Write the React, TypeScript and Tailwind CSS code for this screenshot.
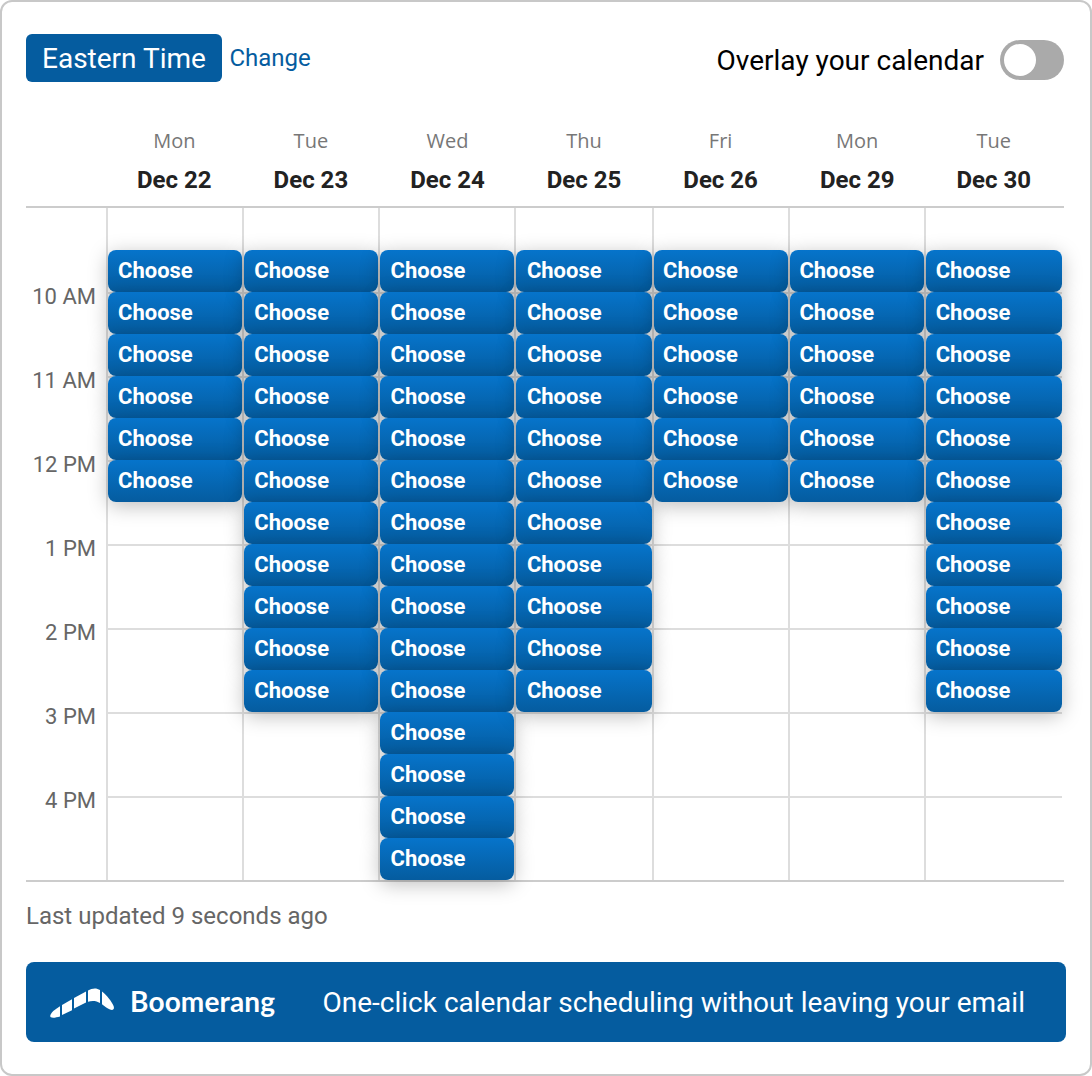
const days = [
  { name: 'Mon', date: 'Dec 22', slots: 6, width: 'w-[136px]', pad: 'pl-[10px]' },
  { name: 'Tue', date: 'Dec 23', slots: 11, width: 'w-[136px]', pad: 'pl-[10.3px]' },
  { name: 'Wed', date: 'Dec 24', slots: 15, width: 'w-[136px]', pad: 'pl-[10.6px]' },
  { name: 'Thu', date: 'Dec 25', slots: 11, width: 'w-[138px]', pad: 'pl-[10.9px]' },
  { name: 'Fri', date: 'Dec 26', slots: 6, width: 'w-[136px]', pad: 'pl-[9.1px]' },
  { name: 'Mon', date: 'Dec 29', slots: 6, width: 'w-[136px]', pad: 'pl-[9.4px]' },
  { name: 'Tue', date: 'Dec 30', slots: 11, width: 'w-[138px]', pad: 'pl-[9.7px]' },
];

const hours = ['10 AM', '11 AM', '12 PM', '1 PM', '2 PM', '3 PM', '4 PM'];

type Day = (typeof days)[number];

function Header() {
  return (
    <header className="flex h-12 items-center">
      <div className="flex h-12 items-center rounded-md bg-[#055c9f] px-4 pt-0.5 text-[28px] text-white">
        Eastern Time
      </div>
      <a className="ml-[7.5px] text-2xl text-[#055c9f]">Change</a>
      <span className="mt-1.5 ml-auto text-[28px] text-black">Overlay your calendar</span>
      <button aria-label="Overlay your calendar" className="mt-1 mr-0.5 ml-4 h-10 w-16 rounded-full bg-[#aaa] p-1">
        <span className="block size-8 rounded-full bg-white" />
      </button>
    </header>
  );
}

function DayColumn({ day }: { day: Day }) {
  return (
    <div className={`grid h-[672px] border-l-2 border-[#ddd] ${day.width}`}>
      <div className="col-start-1 row-start-1">
        <div className="h-[84px]" />
        {hours.map((hour) => (
          <div key={hour} className="h-[84px] border-t-2 border-[#ddd]" />
        ))}
      </div>
      <div className="col-start-1 row-start-1 pt-[42px]">
        {Array.from({ length: day.slots }, (_, i) => (
          <div
            key={i}
            className={`relative flex h-[42px] items-center rounded-lg bg-linear-to-b from-[#0674cb] to-[#055c9f] pb-0.5 text-[22px] font-bold text-white shadow-[0_4px_20px_rgba(0,0,0,0.26)] ${day.pad}`}
          >
            Choose
          </div>
        ))}
      </div>
    </div>
  );
}

function Logo() {
  return (
    <svg viewBox="0 0 64 30" className="mt-0.5 h-[30px] w-16" fill="white">
      <path d="M10 18.2V28.4C6.500 29.300 2.800 30.200 .8 29.200C-.8 28 1.200 25 3.600 22.800C5.500 21.200 7.800 19.500 10 18.200Z" />
      <path d="M12 17L22 11.200V22.300L12 27Z" />
      <path d="M24 10L36 3.500V14.500L24 20.500Z" />
      <path d="M38 2.400C42 .1 46.500 -.4 50 2V15C46.500 12.600 42 12.400 38 13.700Z" />
      <path d="M52 3.500C57 7.500 61.500 13 63.600 18C64.700 21.300 63 22.700 60 21.500C57.300 20.500 54.500 18.200 52 16.200Z" />
    </svg>
  );
}

export default function App() {
  return (
    <main className="flex h-[1076px] w-[1092px] flex-col rounded-xl border-2 border-[#c8c8c8] bg-white px-6 pt-8 font-['Roboto',sans-serif]">
      <Header />
      <div className="mt-11 ml-20 flex h-20 w-[956px]">
        {days.map((day) => (
          <div key={day.date} className="flex-1 text-center">
            <div className="h-[30px] font-['Open_Sans',sans-serif] text-xl leading-[30px] text-[#777]">{day.name}</div>
            <div className="mt-2 text-2xl leading-8 font-bold text-[#222]">{day.date}</div>
          </div>
        ))}
      </div>
      <section className="flex h-[676px] w-[1038px] border-y-2 border-[#ccc]">
        <div className="w-20 pt-[68px] pr-2.5 text-right text-[22px] text-[#666]">
          {hours.map((hour) => (
            <div key={hour} className="h-[84px] leading-[42px] whitespace-nowrap">{hour}</div>
          ))}
        </div>
        {days.map((day) => (
          <DayColumn key={day.date} day={day} />
        ))}
      </section>
      <p className="mt-4 h-9 text-2xl leading-9 text-[#666]">Last updated 9 seconds ago</p>
      <footer className="mt-7 flex h-20 w-[1040px] items-center rounded-lg bg-[#055c9f] pl-6 text-white">
        <Logo />
        <span className="ml-4 w-[192.5px] pb-0.5 font-['Lato',sans-serif] text-[28px] font-bold tracking-[0.15px]">Boomerang</span>
        <span className="pt-0.5 text-[28px]">One-click calendar scheduling without leaving your email</span>
      </footer>
    </main>
  );
}
